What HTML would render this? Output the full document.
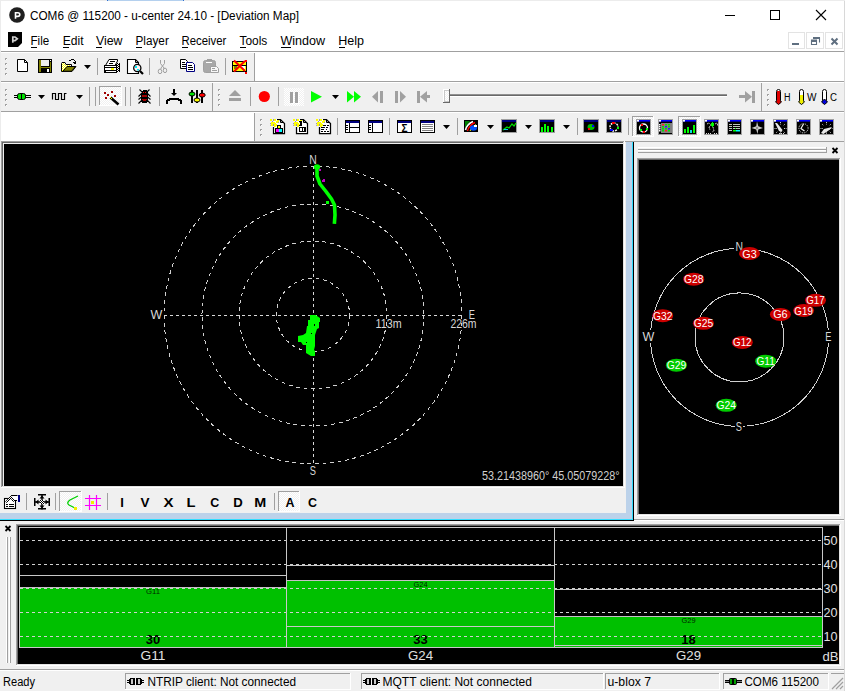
<!DOCTYPE html>
<html><head><meta charset="utf-8"><style>
html,body{margin:0;padding:0;background:#f0f0f0;overflow:hidden;width:845px;height:691px}
svg{position:absolute;left:0;top:0;display:block}
</style></head><body>
<svg width="845" height="691" viewBox="0 0 845 691">
<rect x="0" y="0" width="845" height="691" fill="#f0f0f0" />
<rect x="0" y="0" width="845" height="30" fill="#ffffff" />
<circle cx="17" cy="15" r="7.8" fill="#1f1f1f"/>
<path d="M15.5 18.8 V12.8 H17.8 Q19.8 12.8 19.8 14.6 Q19.8 16.4 17.8 16.4 H15.5" fill="none" stroke="#fff" stroke-width="1.6"/>
<text x="30" y="20" font-family='"Liberation Sans", sans-serif' font-size="12" font-weight="normal" fill="#000" text-anchor="start"  textLength="269" lengthAdjust="spacingAndGlyphs">COM6 @ 115200 - u-center 24.10 - [Deviation Map]</text>
<rect x="725" y="15" width="10" height="1" fill="#000" />
<rect x="770.5" y="10.5" width="9" height="9" fill="none" stroke="#000" stroke-width="1"/>
<path d="M816 10 L826 20 M826 10 L816 20" stroke="#000" stroke-width="1.1"/>
<rect x="0" y="30" width="845" height="21" fill="#ffffff" />
<path d="M8 32 H22 V43 L18 47 H8 Z" fill="#000"/>
<path d="M12.8 42.8 V37 H15 L17.3 38.8 L15 40.6 H12.8" fill="none" stroke="#d0d0d0" stroke-width="1.7"/>
<text x="30.5" y="45" font-family='"Liberation Sans", sans-serif' font-size="12" font-weight="normal" fill="#000" text-anchor="start"  textLength="18.7" lengthAdjust="spacingAndGlyphs">File</text>
<rect x="31" y="47" width="6" height="1" fill="#000" />
<text x="62.7" y="45" font-family='"Liberation Sans", sans-serif' font-size="12" font-weight="normal" fill="#000" text-anchor="start"  textLength="20.8" lengthAdjust="spacingAndGlyphs">Edit</text>
<rect x="63" y="47" width="6" height="1" fill="#000" />
<text x="95.9" y="45" font-family='"Liberation Sans", sans-serif' font-size="12" font-weight="normal" fill="#000" text-anchor="start"  textLength="26.6" lengthAdjust="spacingAndGlyphs">View</text>
<rect x="96" y="47" width="6" height="1" fill="#000" />
<text x="135.5" y="45" font-family='"Liberation Sans", sans-serif' font-size="12" font-weight="normal" fill="#000" text-anchor="start"  textLength="33.3" lengthAdjust="spacingAndGlyphs">Player</text>
<rect x="136" y="47" width="6" height="1" fill="#000" />
<text x="181.6" y="45" font-family='"Liberation Sans", sans-serif' font-size="12" font-weight="normal" fill="#000" text-anchor="start"  textLength="44.8" lengthAdjust="spacingAndGlyphs">Receiver</text>
<rect x="182" y="47" width="6" height="1" fill="#000" />
<text x="239.5" y="45" font-family='"Liberation Sans", sans-serif' font-size="12" font-weight="normal" fill="#000" text-anchor="start"  textLength="27.8" lengthAdjust="spacingAndGlyphs">Tools</text>
<rect x="240" y="47" width="6" height="1" fill="#000" />
<text x="280.5" y="45" font-family='"Liberation Sans", sans-serif' font-size="12" font-weight="normal" fill="#000" text-anchor="start"  textLength="44.6" lengthAdjust="spacingAndGlyphs">Window</text>
<rect x="281" y="47" width="10" height="1" fill="#000" />
<text x="338.3" y="45" font-family='"Liberation Sans", sans-serif' font-size="12" font-weight="normal" fill="#000" text-anchor="start"  textLength="25.8" lengthAdjust="spacingAndGlyphs">Help</text>
<rect x="339" y="47" width="6" height="1" fill="#000" />
<rect x="788.5" y="32.5" width="16" height="16" fill="#fff" stroke="#e3e3e3"/>
<rect x="806.5" y="32.5" width="17" height="16" fill="#fff" stroke="#e3e3e3"/>
<rect x="825.5" y="32.5" width="17" height="16" fill="#fff" stroke="#e3e3e3"/>
<rect x="792" y="43" width="7" height="2" fill="#5f6f80" />
<path d="M814 38 H819.5 V42.5 M811.5 44.5 V40 H816.5 V44.5 Z" fill="none" stroke="#5f6f80" stroke-width="1.1"/>
<rect x="811" y="40" width="6" height="2" fill="#5f6f80" />
<rect x="813" y="37" width="7" height="2" fill="#5f6f80" />
<path d="M831.5 38.5 L837.5 44.5 M837.5 38.5 L831.5 44.5" stroke="#5f6f80" stroke-width="2"/>
<rect x="0" y="51" width="844" height="1" fill="#a0a0a0" />
<rect x="0" y="52" width="845" height="89" fill="#ffffff" />
<rect x="0" y="53" width="254" height="28" fill="#f0f0f0" />
<rect x="254" y="53" width="1" height="29" fill="#a0a0a0" />
<rect x="0" y="81" width="845" height="1" fill="#a0a0a0" />
<rect x="0" y="83" width="845" height="28" fill="#f0f0f0" />
<rect x="0" y="111" width="845" height="1" fill="#a0a0a0" />
<rect x="212" y="83" width="1" height="29" fill="#a0a0a0" />
<rect x="761" y="83" width="1" height="29" fill="#a0a0a0" />
<rect x="255" y="113" width="589" height="28" fill="#f0f0f0" />
<rect x="254" y="113" width="1" height="29" fill="#a0a0a0" />
<rect x="254" y="141" width="590" height="1" fill="#a0a0a0" />
<defs><pattern id="dith" x="0" y="0" width="2" height="2" patternUnits="userSpaceOnUse"><rect width="2" height="2" fill="#f0f0f0"/><rect width="1" height="1" fill="#fff"/><rect x="1" y="1" width="1" height="1" fill="#fff"/></pattern><pattern id="chk" x="0" y="0" width="2" height="2" patternUnits="userSpaceOnUse"><rect width="2" height="2" fill="#fff"/><rect width="1" height="1" fill="#000"/><rect x="1" y="1" width="1" height="1" fill="#000"/></pattern></defs>
<rect x="5" y="58" width="2" height="2" fill="#a0a0a0" />
<rect x="6" y="59" width="1" height="1" fill="#ffffff" />
<rect x="5" y="63" width="2" height="2" fill="#a0a0a0" />
<rect x="6" y="64" width="1" height="1" fill="#ffffff" />
<rect x="5" y="68" width="2" height="2" fill="#a0a0a0" />
<rect x="6" y="69" width="1" height="1" fill="#ffffff" />
<rect x="5" y="73" width="2" height="2" fill="#a0a0a0" />
<rect x="6" y="74" width="1" height="1" fill="#ffffff" />
<path d="M17.5 59.5 H24.5 L27.5 62.5 V71.5 H17.5 Z" fill="#fff" stroke="#000" stroke-width="1"/>
<path d="M24.5 59.5 V62.5 H27.5" fill="none" stroke="#000"/>
<rect x="38" y="59" width="14" height="14" fill="#000" />
<rect x="39" y="60" width="2" height="12" fill="#808000" />
<rect x="50" y="62" width="1" height="10" fill="#808000" />
<rect x="39" y="67" width="12" height="1" fill="#808000" />
<rect x="41" y="60" width="8" height="6" fill="#ececec" />
<rect x="50" y="60" width="1" height="1" fill="#fff" />
<rect x="47" y="69" width="2" height="3" fill="#fff" />
<defs><pattern id="ychk" x="0" y="0" width="2" height="2" patternUnits="userSpaceOnUse"><rect width="2" height="2" fill="#ffffff"/><rect width="1" height="1" fill="#ffff00"/><rect x="1" y="1" width="1" height="1" fill="#ffff00"/></pattern></defs>
<path d="M61.5 63.5 V71.5 H72 L76 66.5 H71.5 V64.5 H66 L65 62.5 H62 Z" fill="url(#ychk)" stroke="#000"/>
<path d="M63 71.2 L67 66.5 H75.5 L71.5 71.2 Z" fill="#808000" stroke="#000" stroke-width="1"/>
<rect x="69" y="60" width="2" height="1" fill="#000" />
<rect x="71" y="59" width="3" height="1" fill="#000" />
<rect x="74" y="60" width="1" height="1" fill="#000" />
<rect x="75" y="61" width="1" height="2" fill="#000" />
<rect x="73" y="62" width="3" height="1" fill="#000" />
<rect x="74" y="63" width="2" height="1" fill="#000" />
<path d="M84 65 h7 l-3.5 4 z" fill="#000"/>
<rect x="97" y="58" width="1" height="17" fill="#a0a0a0" />
<rect x="116" y="63" width="4" height="9" fill="url(#chk)" />
<rect x="119" y="64" width="1" height="8" fill="#000" />
<path d="M109 59.5 H117.5 V61 L115 65.5 H105.5 Z" fill="#fff" stroke="#000"/>
<rect x="110" y="61" width="5" height="1" fill="#000" />
<rect x="109" y="63" width="4" height="1" fill="#000" />
<rect x="104" y="65" width="13" height="8" fill="#000" />
<rect x="105" y="66" width="11" height="1" fill="#fff" />
<rect x="105" y="68" width="11" height="2" fill="#fff" />
<rect x="111" y="68" width="3" height="2" fill="#ffff00" />
<rect x="106" y="71" width="10" height="1" fill="#fff" />
<path d="M127.5 59.5 H135.5 L138.5 62.5 V73.5 H127.5 Z" fill="#fff" stroke="#000" stroke-width="1.1"/>
<path d="M135.5 59.5 V62.5 H138.5" fill="none" stroke="#000"/>
<circle cx="137.3" cy="68" r="3.6" fill="#fff4f4" stroke="#000" stroke-width="1.3"/>
<rect x="135" y="66" width="2" height="2" fill="#00f0ff" />
<rect x="137" y="69" width="2" height="1.5" fill="#00f0ff" />
<path d="M140 71 L143 74" stroke="#000" stroke-width="2.2"/>
<rect x="149" y="58" width="1" height="17" fill="#a0a0a0" />
<path d="M160.5 60 V63.5 L164 68 V69 M164.5 60 V63.5 L161 68 V69" fill="none" stroke="#a0a0a0" stroke-width="1"/>
<ellipse cx="160" cy="71.4" rx="1.8" ry="2.3" fill="none" stroke="#a0a0a0"/><ellipse cx="165" cy="70.4" rx="1.7" ry="2.3" fill="none" stroke="#a0a0a0"/>
<path d="M180.5 59.5 H185.5 L187.5 61.5 V68.5 H180.5 Z" fill="#fff" stroke="#000"/>
<rect x="182" y="62" width="3" height="1" fill="#000" />
<rect x="182" y="64" width="4" height="1" fill="#000" />
<rect x="182" y="66" width="4" height="1" fill="#000" />
<path d="M186.5 62.5 H192.5 L194.5 64.5 V71.5 H186.5 Z" fill="#fff" stroke="#000080"/>
<rect x="188" y="65" width="4" height="1" fill="#000" />
<rect x="188" y="67" width="5" height="1" fill="#000" />
<rect x="188" y="69" width="5" height="1" fill="#000" />
<rect x="203.5" y="60.5" width="12" height="12" rx="2" fill="#a8a8a8" stroke="#a0a0a0"/>
<rect x="207" y="59" width="5" height="2" fill="#a0a0a0" />
<rect x="206" y="62" width="6" height="1" fill="#fff" />
<path d="M210.5 66.5 H216.5 L218.5 68.5 V72.5 H210.5 Z" fill="#f8f8f8" stroke="#a0a0a0"/>
<rect x="212" y="68" width="3" height="1" fill="#a0a0a0" />
<rect x="212" y="70" width="5" height="1" fill="#a0a0a0" />
<rect x="225" y="58" width="1" height="17" fill="#a0a0a0" />
<rect x="232" y="61" width="15" height="11" fill="#000" />
<rect x="233" y="62" width="13" height="3" fill="#ffff00" />
<rect x="233" y="66" width="13" height="5" fill="#ffff00" />
<rect x="241" y="66" width="4" height="3" fill="#fff" />
<rect x="234" y="66" width="3" height="3" fill="#808000" />
<path d="M234 60.5 L245 71 M234 71.5 L245 61" stroke="#ff0000" stroke-width="2"/>
<rect x="245" y="60" width="2" height="2" fill="#ff0000" />
<rect x="245" y="72" width="2" height="2" fill="#ff0000" />
<rect x="5" y="89" width="2" height="2" fill="#a0a0a0" />
<rect x="6" y="90" width="1" height="1" fill="#ffffff" />
<rect x="5" y="94" width="2" height="2" fill="#a0a0a0" />
<rect x="6" y="95" width="1" height="1" fill="#ffffff" />
<rect x="5" y="99" width="2" height="2" fill="#a0a0a0" />
<rect x="6" y="100" width="1" height="1" fill="#ffffff" />
<rect x="5" y="104" width="2" height="2" fill="#a0a0a0" />
<rect x="6" y="105" width="1" height="1" fill="#ffffff" />
<rect x="14" y="95" width="17" height="1" fill="#000" />
<rect x="14" y="97" width="17" height="1" fill="#000" />
<rect x="17.5" y="93.5" width="8" height="6" rx="2" fill="#00e000" stroke="#000"/>
<rect x="21" y="94" width="1" height="5" fill="#000" />
<path d="M38 95 h7 l-3.5 4 z" fill="#000"/>
<path d="M52.5 99.5 V93.5 H55.5 V99.5 H58.5 V93.5 H61.5 V99.5 H64.5 V93.5 H66.5" fill="none" stroke="#000" stroke-width="1.2"/>
<path d="M76 95 h7 l-3.5 4 z" fill="#000"/>
<rect x="89" y="87" width="1" height="19" fill="#a0a0a0" />
<rect x="95" y="87" width="1" height="19" fill="#a0a0a0" />
<rect x="99" y="86" width="23" height="20" fill="url(#dith)" />
<rect x="99" y="86" width="23" height="1" fill="#a0a0a0" />
<rect x="99" y="86" width="1" height="20" fill="#a0a0a0" />
<rect x="99" y="105" width="23" height="1" fill="#ffffff" />
<rect x="121" y="86" width="1" height="20" fill="#ffffff" />
<path d="M110.5 97.5 L118.5 104.5" stroke="#000" stroke-width="2.6"/>
<rect x="110" y="97" width="1" height="1" fill="#ffff00" />
<rect x="111" y="98" width="1" height="1" fill="#ffff00" />
<rect x="104" y="92" width="2" height="2" fill="#a00000" />
<rect x="111" y="91" width="2" height="2" fill="#a00000" />
<rect x="107" y="94" width="2" height="2" fill="#a00000" />
<rect x="114" y="95" width="2" height="2" fill="#a00000" />
<rect x="105" y="97" width="2" height="2" fill="#a00000" />
<rect x="125" y="87" width="1" height="19" fill="#a0a0a0" />
<rect x="130" y="87" width="1" height="19" fill="#a0a0a0" />
<path d="M139.5 89.5 L142.5 92.5 M149.5 89.5 L146.5 92.5 M138.5 96.5 L141.5 93.5 M150.5 96.5 L147.5 93.5 M138.5 99.5 L141.5 97 M150.5 99.5 L147.5 97 M138.5 103.5 L141.5 100.5 M150.5 103.5 L147.5 100.5" stroke="#000" stroke-width="1.1"/>
<rect x="143" y="90" width="4" height="4" fill="#000" />
<rect x="142" y="91" width="6" height="2" fill="#000" />
<rect x="143" y="92" width="1" height="1" fill="#ff0000" />
<rect x="145" y="92" width="1" height="1" fill="#ff0000" />
<rect x="141" y="93" width="7" height="9" fill="#000" />
<rect x="142" y="102" width="5" height="1" fill="#000" />
<rect x="142" y="95" width="5" height="2" fill="#a00000" />
<rect x="142" y="99" width="5" height="1" fill="#a00000" />
<rect x="143" y="100" width="3" height="1" fill="#a00000" />
<rect x="159" y="87" width="1" height="19" fill="#a0a0a0" />
<rect x="173" y="89" width="2" height="4" fill="#000" />
<path d="M171 93 H177 L174 96 Z" fill="#000"/>
<rect x="169" y="98" width="10" height="2" fill="#000" />
<rect x="167" y="99" width="3" height="2" fill="#000" />
<rect x="166" y="100" width="2" height="4" fill="#000" />
<rect x="178" y="99" width="3" height="2" fill="#000" />
<rect x="180" y="100" width="2" height="4" fill="#000" />
<rect x="191" y="90" width="2" height="13" fill="#000" />
<rect x="196" y="90" width="2" height="13" fill="#000" />
<rect x="201" y="90" width="2" height="13" fill="#000" />
<ellipse cx="192" cy="94" rx="3" ry="2" fill="#00e000" stroke="#000"/>
<ellipse cx="197" cy="100" rx="3" ry="2" fill="#ffff00" stroke="#000"/>
<ellipse cx="202.2" cy="95.1" rx="3" ry="2" fill="#ff0000" stroke="#000"/>
<rect x="218" y="89" width="2" height="2" fill="#a0a0a0" />
<rect x="219" y="90" width="1" height="1" fill="#ffffff" />
<rect x="218" y="94" width="2" height="2" fill="#a0a0a0" />
<rect x="219" y="95" width="1" height="1" fill="#ffffff" />
<rect x="218" y="99" width="2" height="2" fill="#a0a0a0" />
<rect x="219" y="100" width="1" height="1" fill="#ffffff" />
<rect x="218" y="104" width="2" height="2" fill="#a0a0a0" />
<rect x="219" y="105" width="1" height="1" fill="#ffffff" />
<path d="M229 96 L235 90 L241 96 Z" fill="#a0a0a0"/>
<rect x="229" y="98" width="12" height="3" fill="#a0a0a0" />
<rect x="250" y="87" width="1" height="19" fill="#a0a0a0" />
<circle cx="264.3" cy="96.5" r="5.6" fill="#ff0000"/>
<rect x="278" y="87" width="1" height="19" fill="#a0a0a0" />
<rect x="284" y="88" width="20" height="18" fill="url(#dith)" />
<rect x="290" y="92" width="3" height="11" fill="#a0a0a0" />
<rect x="295" y="92" width="3" height="11" fill="#a0a0a0" />
<rect x="293" y="93" width="1" height="11" fill="#fff" />
<rect x="298" y="93" width="1" height="11" fill="#fff" />
<rect x="291" y="103" width="3" height="1" fill="#fff" />
<rect x="296" y="103" width="3" height="1" fill="#fff" />
<path d="M311 91 L322 96.8 L311 102.5 Z" fill="#00ff00"/>
<path d="M332 95 h7 l-3.5 4 z" fill="#000"/>
<path d="M347 91 L354 96.8 L347 102.5 Z M354 91 L361 96.8 L354 102.5 Z" fill="#00ff00"/>
<path d="M378 91 L372 96.8 L378 102.5 Z" fill="#a0a0a0"/>
<rect x="380" y="91" width="3" height="12" fill="#a0a0a0" />
<rect x="395" y="91" width="3" height="12" fill="#a0a0a0" />
<path d="M400 91 L406 96.8 L400 102.5 Z" fill="#a0a0a0"/>
<rect x="417" y="91" width="3" height="12" fill="#a0a0a0" />
<path d="M427 91 L420 96.8 L427 102.5 Z" fill="#a0a0a0"/>
<rect x="423" y="95" width="7" height="3" fill="#a0a0a0" />
<rect x="449" y="94" width="278" height="1" fill="#909090" />
<rect x="449" y="95" width="278" height="1" fill="#696969" />
<rect x="449" y="96" width="278" height="1" fill="#ffffff" />
<rect x="443" y="89" width="7" height="14" fill="#ffffff" />
<rect x="444" y="90" width="5" height="12" fill="#c8c8c8" />
<rect x="445" y="91" width="4" height="10" fill="url(#dith)" />
<rect x="449" y="89" width="1" height="14" fill="#696969" />
<rect x="443" y="102" width="7" height="1" fill="#696969" />
<rect x="752" y="91" width="3" height="12" fill="#a0a0a0" />
<path d="M745 91 L752 96.8 L745 102.5 Z" fill="#a0a0a0"/>
<rect x="739" y="95" width="7" height="3" fill="#a0a0a0" />
<rect x="767" y="89" width="2" height="2" fill="#a0a0a0" />
<rect x="768" y="90" width="1" height="1" fill="#ffffff" />
<rect x="767" y="94" width="2" height="2" fill="#a0a0a0" />
<rect x="768" y="95" width="1" height="1" fill="#ffffff" />
<rect x="767" y="99" width="2" height="2" fill="#a0a0a0" />
<rect x="768" y="100" width="1" height="1" fill="#ffffff" />
<rect x="767" y="104" width="2" height="2" fill="#a0a0a0" />
<rect x="768" y="105" width="1" height="1" fill="#ffffff" />
<rect x="776.5" y="89.5" width="4" height="13" rx="2" fill="#fff" stroke="#000"/>
<path d="M778.5 99 L781.5 102 L778.5 104.5 L775.5 102 Z" fill="#e00000" stroke="#000"/>
<rect x="777" y="91" width="3" height="10" fill="#e00000" />
<text x="784" y="100.5" font-family='"Liberation Sans", sans-serif' font-size="10" font-weight="normal" fill="#000" text-anchor="start"  textLength="6.5" lengthAdjust="spacingAndGlyphs">H</text>
<rect x="799.5" y="89.5" width="4" height="13" rx="2" fill="#fff" stroke="#000"/>
<path d="M801.5 99 L804.5 102 L801.5 104.5 L798.5 102 Z" fill="#f0f000" stroke="#000"/>
<rect x="800" y="95" width="3" height="6" fill="#f0f000" />
<text x="807" y="100.5" font-family='"Liberation Sans", sans-serif' font-size="10" font-weight="normal" fill="#000" text-anchor="start"  textLength="9.5" lengthAdjust="spacingAndGlyphs">W</text>
<rect x="822.5" y="89.5" width="4" height="13" rx="2" fill="#fff" stroke="#000"/>
<path d="M824.5 99 L827.5 102 L824.5 104.5 L821.5 102 Z" fill="#0000e0" stroke="#000"/>
<rect x="823" y="101" width="3" height="0" fill="#0000e0" />
<text x="830" y="100.5" font-family='"Liberation Sans", sans-serif' font-size="10" font-weight="normal" fill="#000" text-anchor="start"  textLength="7" lengthAdjust="spacingAndGlyphs">C</text>
<rect x="260" y="119" width="2" height="2" fill="#a0a0a0" />
<rect x="261" y="120" width="1" height="1" fill="#ffffff" />
<rect x="260" y="124" width="2" height="2" fill="#a0a0a0" />
<rect x="261" y="125" width="1" height="1" fill="#ffffff" />
<rect x="260" y="129" width="2" height="2" fill="#a0a0a0" />
<rect x="261" y="130" width="1" height="1" fill="#ffffff" />
<rect x="260" y="134" width="2" height="2" fill="#a0a0a0" />
<rect x="261" y="135" width="1" height="1" fill="#ffffff" />
<path d="M273 134 V119 H281 L285 123 V134 Z" fill="#fff"/>
<path d="M273.5 127 V133.5 H284.5 V123.5 L280.5 119.5 H277" fill="none" stroke="#000" stroke-width="1.25"/>
<path d="M280.5 120 V122.5 H284" fill="none" stroke="#000" stroke-width="1"/>
<path d="M270 119 L273 122 M276 122.5 H279 M270 123.5 H272 M273.5 119 V121 M273.5 124 V126 M270 125.5 L271 125" stroke="#9898a8" stroke-width="1"/>
<rect x="270" y="119" width="2" height="2" fill="#ffff00" />
<rect x="274" y="119" width="2" height="2" fill="#ffff00" />
<rect x="277" y="120" width="2" height="2" fill="#ffff00" />
<rect x="276" y="121" width="2" height="2" fill="#ffff00" />
<rect x="271" y="122" width="2" height="2" fill="#ffff00" />
<rect x="273" y="122" width="2" height="2" fill="#ffff00" />
<rect x="274" y="123" width="2" height="2" fill="#ffff00" />
<rect x="275" y="124" width="2" height="2" fill="#ffff00" />
<rect x="271" y="124" width="2" height="2" fill="#ffff00" />
<rect x="274" y="125" width="2" height="2" fill="#ffff00" />
<rect x="275" y="128" width="8" height="5" fill="#000" />
<rect x="276" y="129" width="3" height="3" fill="#ff00ff" />
<rect x="279" y="129" width="3" height="3" fill="#00ffff" />
<rect x="277" y="125" width="4" height="4" fill="#000" />
<rect x="278" y="126" width="2" height="2" fill="#ffff00" />
<path d="M296 134 V119 H304 L308 123 V134 Z" fill="#fff"/>
<path d="M296.5 127 V133.5 H307.5 V123.5 L303.5 119.5 H300" fill="none" stroke="#000" stroke-width="1.25"/>
<path d="M303.5 120 V122.5 H307" fill="none" stroke="#000" stroke-width="1"/>
<path d="M293 119 L296 122 M299 122.5 H302 M293 123.5 H295 M296.5 119 V121 M296.5 124 V126 M293 125.5 L294 125" stroke="#9898a8" stroke-width="1"/>
<rect x="293" y="119" width="2" height="2" fill="#ffff00" />
<rect x="297" y="119" width="2" height="2" fill="#ffff00" />
<rect x="300" y="120" width="2" height="2" fill="#ffff00" />
<rect x="299" y="121" width="2" height="2" fill="#ffff00" />
<rect x="294" y="122" width="2" height="2" fill="#ffff00" />
<rect x="296" y="122" width="2" height="2" fill="#ffff00" />
<rect x="297" y="123" width="2" height="2" fill="#ffff00" />
<rect x="298" y="124" width="2" height="2" fill="#ffff00" />
<rect x="294" y="124" width="2" height="2" fill="#ffff00" />
<rect x="297" y="125" width="2" height="2" fill="#ffff00" />
<rect x="300" y="121" width="2" height="5" fill="#000" />
<rect x="299" y="121" width="1" height="1" fill="#000" />
<rect x="299" y="125" width="3" height="1" fill="#000" />
<rect x="299" y="127" width="4" height="5" fill="#000" />
<rect x="300" y="128" width="2" height="3" fill="#fff" />
<rect x="304" y="127" width="2" height="5" fill="#000" />
<rect x="303" y="127" width="1" height="1" fill="#000" />
<rect x="303" y="131" width="3" height="1" fill="#000" />
<path d="M319 134 V119 H327 L331 123 V134 Z" fill="#fff"/>
<path d="M319.5 127 V133.5 H330.5 V123.5 L326.5 119.5 H323" fill="none" stroke="#000" stroke-width="1.25"/>
<path d="M326.5 120 V122.5 H330" fill="none" stroke="#000" stroke-width="1"/>
<path d="M316 119 L319 122 M322 122.5 H325 M316 123.5 H318 M319.5 119 V121 M319.5 124 V126 M316 125.5 L317 125" stroke="#9898a8" stroke-width="1"/>
<rect x="316" y="119" width="2" height="2" fill="#ffff00" />
<rect x="320" y="119" width="2" height="2" fill="#ffff00" />
<rect x="323" y="120" width="2" height="2" fill="#ffff00" />
<rect x="322" y="121" width="2" height="2" fill="#ffff00" />
<rect x="317" y="122" width="2" height="2" fill="#ffff00" />
<rect x="319" y="122" width="2" height="2" fill="#ffff00" />
<rect x="320" y="123" width="2" height="2" fill="#ffff00" />
<rect x="321" y="124" width="2" height="2" fill="#ffff00" />
<rect x="317" y="124" width="2" height="2" fill="#ffff00" />
<rect x="320" y="125" width="2" height="2" fill="#ffff00" />
<rect x="323" y="125" width="3" height="1" fill="#000" />
<rect x="327" y="125" width="2" height="1" fill="#000" />
<rect x="321" y="127" width="4" height="1" fill="#000" />
<rect x="326" y="127" width="2" height="1" fill="#000" />
<rect x="321" y="129" width="3" height="1" fill="#000" />
<rect x="326" y="129" width="1" height="1" fill="#000" />
<rect x="321" y="131" width="2" height="1" fill="#000" />
<rect x="324" y="131" width="2" height="1" fill="#000" />
<rect x="327" y="131" width="2" height="1" fill="#000" />
<rect x="337" y="118" width="1" height="17" fill="#a0a0a0" />
<rect x="345" y="120" width="15" height="13" fill="#000" />
<rect x="346" y="121" width="13" height="2" fill="#000080" />
<rect x="346" y="123" width="13" height="9" fill="#fff" />
<rect x="349" y="123" width="1" height="9" fill="#000" />
<rect x="349" y="127" width="10" height="1" fill="#000" />
<rect x="346" y="125" width="2" height="1" fill="#000" />
<rect x="346" y="127" width="2" height="1" fill="#000" />
<rect x="346" y="129" width="2" height="1" fill="#000" />
<rect x="368" y="120" width="15" height="13" fill="#000" />
<rect x="369" y="121" width="13" height="2" fill="#000080" />
<rect x="369" y="123" width="13" height="9" fill="#fff" />
<rect x="372" y="123" width="1" height="9" fill="#000" />
<rect x="369" y="125" width="2" height="1" fill="#000" />
<rect x="369" y="127" width="2" height="1" fill="#000" />
<rect x="369" y="129" width="2" height="1" fill="#000" />
<rect x="389" y="118" width="1" height="17" fill="#a0a0a0" />
<rect x="397" y="120" width="15" height="13" fill="#000" />
<rect x="398" y="121" width="13" height="2" fill="#000080" />
<rect x="398" y="123" width="13" height="9" fill="#fff" />
<text x="404.5" y="131.5" font-family='"Liberation Sans", sans-serif' font-size="10" font-weight="bold" fill="#000" text-anchor="middle" >&#931;</text>
<rect x="420" y="120" width="15" height="13" fill="#000" />
<rect x="421" y="121" width="13" height="2" fill="#000080" />
<rect x="421" y="123" width="13" height="9" fill="#fff" />
<rect x="422" y="124" width="11" height="1" fill="#808080" />
<rect x="422" y="126" width="11" height="1" fill="#808080" />
<rect x="422" y="128" width="11" height="1" fill="#808080" />
<rect x="422" y="130" width="11" height="1" fill="#808080" />
<path d="M443 125 h7 l-3.5 4 z" fill="#000"/>
<rect x="457" y="118" width="1" height="17" fill="#a0a0a0" />
<rect x="464" y="120" width="14" height="12" fill="#000" />
<rect x="465" y="121" width="12" height="10" fill="#000" />
<path d="M465 121 H470 L465 128 Z" fill="#008000"/>
<path d="M465.5 130 Q467 124 473 121.5" stroke="#ffffff" stroke-width="1.6" fill="none"/>
<path d="M467.5 131 Q469 125 475 122.5" stroke="#ff0000" stroke-width="1.4" fill="none"/>
<path d="M470 131 Q471 127 476 124.5" stroke="#ffff00" stroke-width="1" fill="none"/>
<ellipse cx="473.5" cy="128" rx="3.5" ry="2.8" fill="#0050ff"/>
<rect x="474" y="125" width="3" height="2" fill="#fff" />
<path d="M487 125 h7 l-3.5 4 z" fill="#000"/>
<rect x="501" y="119" width="16" height="14" fill="#a0a0a0" />
<rect x="502" y="120" width="14" height="12" fill="#000" />
<rect x="502" y="120" width="14" height="2" fill="#000080" />
<path d="M503 130 L507 127 L509 128 L512 124 L514 126 L516 123" stroke="#00e000" stroke-width="1.2" fill="none"/>
<rect x="504" y="129" width="4" height="1" fill="#00c8ff" />
<path d="M525 125 h7 l-3.5 4 z" fill="#000"/>
<rect x="539" y="119" width="16" height="14" fill="#a0a0a0" />
<rect x="540" y="120" width="14" height="12" fill="#000" />
<rect x="540" y="120" width="14" height="2" fill="#000080" />
<rect x="541" y="127" width="2" height="5" fill="#00ff00" />
<rect x="544" y="124" width="2" height="8" fill="#00ff00" />
<rect x="547" y="126" width="2" height="6" fill="#00ff00" />
<rect x="551" y="127" width="2" height="5" fill="#00ff00" />
<path d="M563 125 h7 l-3.5 4 z" fill="#000"/>
<rect x="577" y="118" width="1" height="17" fill="#a0a0a0" />
<rect x="583" y="119" width="16" height="14" fill="#a0a0a0" />
<rect x="584" y="120" width="14" height="12" fill="#000" />
<rect x="584" y="120" width="14" height="2" fill="#000080" />
<ellipse cx="591" cy="127" rx="3.5" ry="3" fill="#00c000"/>
<rect x="588" y="128" width="2" height="2" fill="#ff0000" />
<rect x="592" y="125" width="2" height="2" fill="#0000ff" />
<rect x="606" y="119" width="16" height="14" fill="#a0a0a0" />
<rect x="607" y="120" width="14" height="12" fill="#000" />
<rect x="607" y="120" width="14" height="2" fill="#000080" />
<circle cx="614" cy="127" r="4" fill="none" stroke="#fff" stroke-width="1.5" stroke-dasharray="2 1"/>
<rect x="612" y="122" width="3" height="2" fill="#ff0000" />
<rect x="610" y="129" width="3" height="2" fill="#0000ff" />
<rect x="617" y="127" width="2" height="2" fill="#00ff00" />
<rect x="628" y="118" width="1" height="17" fill="#a0a0a0" />
<rect x="632" y="116" width="22" height="21" fill="url(#dith)" />
<rect x="632" y="116" width="22" height="1" fill="#a0a0a0" />
<rect x="632" y="116" width="1" height="21" fill="#a0a0a0" />
<rect x="632" y="136" width="22" height="1" fill="#ffffff" />
<rect x="653" y="116" width="1" height="21" fill="#ffffff" />
<rect x="636" y="119" width="15" height="16" fill="#a0a0a0" />
<rect x="637" y="120" width="13" height="14" fill="#000" />
<rect x="637" y="120" width="13" height="1.6" fill="#0000ff" />
<rect x="637" y="120" width="2" height="1.6" fill="#fff" />
<circle cx="643.5" cy="128" r="4" fill="none" stroke="#fff" stroke-width="1.3"/>
<rect x="641" y="124" width="2" height="2" fill="#ff0000" />
<rect x="646" y="128" width="2" height="2" fill="#00ff00" />
<rect x="640" y="129" width="2" height="2" fill="#00ff00" />
<rect x="643" y="131" width="2" height="2" fill="#ff0000" />
<rect x="658" y="119" width="15" height="16" fill="#a0a0a0" />
<rect x="659" y="120" width="13" height="14" fill="#000" />
<rect x="659" y="120" width="13" height="1.6" fill="#0000ff" />
<rect x="659" y="120" width="2" height="1.6" fill="#fff" />
<rect x="661" y="123" width="11" height="10" fill="#808080" />
<rect x="662" y="124" width="2" height="1.5" fill="#ff2020" />
<rect x="665" y="124" width="2" height="1.5" fill="#00e000" />
<rect x="668" y="124" width="2" height="1.5" fill="#00e000" />
<rect x="662" y="126" width="2" height="1.5" fill="#00e000" />
<rect x="665" y="126" width="2" height="1.5" fill="#2020ff" />
<rect x="668" y="126" width="2" height="1.5" fill="#00e000" />
<rect x="662" y="128" width="2" height="1.5" fill="#00e000" />
<rect x="665" y="128" width="2" height="1.5" fill="#00e000" />
<rect x="668" y="128" width="2" height="1.5" fill="#2020ff" />
<rect x="662" y="130" width="2" height="1.5" fill="#00e000" />
<rect x="665" y="130" width="2" height="1.5" fill="#ff2020" />
<rect x="668" y="130" width="2" height="1.5" fill="#00e000" />
<rect x="659" y="124" width="1.5" height="1.5" fill="#ffffff" />
<rect x="659" y="126" width="1.5" height="1.5" fill="#ffffff" />
<rect x="659" y="128" width="1.5" height="1.5" fill="#ffffff" />
<rect x="659" y="130" width="1.5" height="1.5" fill="#ffffff" />
<rect x="678" y="116" width="23" height="21" fill="url(#dith)" />
<rect x="678" y="116" width="23" height="1" fill="#a0a0a0" />
<rect x="678" y="116" width="1" height="21" fill="#a0a0a0" />
<rect x="678" y="136" width="23" height="1" fill="#ffffff" />
<rect x="700" y="116" width="1" height="21" fill="#ffffff" />
<rect x="682" y="119" width="15" height="16" fill="#a0a0a0" />
<rect x="683" y="120" width="13" height="14" fill="#000" />
<rect x="683" y="120" width="13" height="1.6" fill="#0000ff" />
<rect x="683" y="120" width="2" height="1.6" fill="#fff" />
<rect x="684" y="129" width="2" height="4" fill="#00ff00" />
<rect x="687" y="127" width="2" height="6" fill="#00ff00" />
<rect x="690" y="130" width="2" height="3" fill="#00e0e0" />
<rect x="693" y="125" width="2" height="8" fill="#00ff00" />
<rect x="704" y="119" width="15" height="16" fill="#a0a0a0" />
<rect x="705" y="120" width="13" height="14" fill="#000" />
<rect x="705" y="120" width="13" height="1.6" fill="#0000ff" />
<rect x="705" y="120" width="2" height="1.6" fill="#fff" />
<path d="M707 124 L709 123 L711 125 L709 127 L710 130 M713 127 L714 131 L712 132 M715 124 L717 123 L718 126" fill="none" stroke="#e0e0e0" stroke-width="1" stroke-dasharray="1 0.6"/>
<rect x="711" y="123" width="3" height="3" fill="#00ff00" />
<rect x="712" y="122" width="1" height="5" fill="#00ff00" />
<rect x="706" y="133" width="1" height="1" fill="#ddd" />
<rect x="708" y="133" width="1" height="1" fill="#ddd" />
<rect x="710" y="133" width="1" height="1" fill="#ddd" />
<rect x="714" y="133" width="1" height="1" fill="#ddd" />
<rect x="716" y="133" width="1" height="1" fill="#ddd" />
<rect x="727" y="119" width="15" height="16" fill="#a0a0a0" />
<rect x="728" y="120" width="13" height="14" fill="#000" />
<rect x="728" y="120" width="13" height="1.6" fill="#0000ff" />
<rect x="728" y="120" width="2" height="1.6" fill="#fff" />
<rect x="729" y="124" width="3" height="1" fill="#c0c0c0" />
<rect x="733" y="124" width="7" height="1" fill="#c0c0c0" />
<rect x="729" y="126" width="3" height="1" fill="#c0c0c0" />
<rect x="733" y="126" width="7" height="1" fill="#c0c0c0" />
<rect x="729" y="128" width="3" height="1" fill="#c0c0c0" />
<rect x="733" y="128" width="7" height="1" fill="#c0c0c0" />
<rect x="729" y="130" width="3" height="1" fill="#c0c0c0" />
<rect x="733" y="130" width="7" height="1" fill="#c0c0c0" />
<rect x="733" y="130" width="3" height="1.5" fill="#00ff00" />
<rect x="736" y="130" width="4" height="1.5" fill="#00ffff" />
<rect x="735" y="128" width="1" height="1" fill="#00ff00" />
<rect x="750" y="119" width="15" height="16" fill="#a0a0a0" />
<rect x="751" y="120" width="13" height="14" fill="#000" />
<rect x="751" y="120" width="13" height="1.6" fill="#0000ff" />
<rect x="751" y="120" width="2" height="1.6" fill="#fff" />
<path d="M757 121.5 L758.3 126.3 L763 128 L758.3 129.5 L757.5 134 L756.2 129.5 L751.5 128 L756.2 126.3 Z" fill="#c8c8c8"/>
<rect x="756" y="127" width="2" height="2" fill="#909090" />
<rect x="773" y="119" width="15" height="16" fill="#a0a0a0" />
<rect x="774" y="120" width="13" height="14" fill="#000" />
<rect x="774" y="120" width="13" height="1.6" fill="#0000ff" />
<rect x="774" y="120" width="2" height="1.6" fill="#fff" />
<path d="M780.5 122 V124.5 M780.5 131.5 V134 M774.5 128.5 H777 M784 128.5 H786.5 M776 124 L777.5 125.5 M785 124 L783.5 125.5 M776 133 L777.5 131.5 M785 133 L783.5 131.5" stroke="#d0d0d0" stroke-width="1" stroke-dasharray="1 0.8"/>
<path d="M775 123 L777 123 L782.5 130 L781.5 132 L779 131 Z" fill="#e8e8e8"/>
<rect x="779" y="133" width="1" height="1" fill="#ddd" />
<rect x="781" y="133" width="1" height="1" fill="#ddd" />
<rect x="783" y="133" width="1" height="1" fill="#ddd" />
<rect x="796" y="119" width="15" height="16" fill="#a0a0a0" />
<rect x="797" y="120" width="13" height="14" fill="#000" />
<rect x="797" y="120" width="13" height="1.6" fill="#0000ff" />
<rect x="797" y="120" width="2" height="1.6" fill="#fff" />
<circle cx="803.5" cy="128.3" r="4.6" fill="none" stroke="#e0e0e0" stroke-width="1" stroke-dasharray="1 0.9"/>
<path d="M803.5 124 L801 128.5 L804.5 131" fill="none" stroke="#f0f0f0" stroke-width="1.2"/>
<rect x="819" y="119" width="15" height="16" fill="#a0a0a0" />
<rect x="820" y="120" width="13" height="14" fill="#000" />
<rect x="820" y="120" width="13" height="1.6" fill="#0000ff" />
<rect x="820" y="120" width="2" height="1.6" fill="#fff" />
<path d="M826.5 122 V124.5 M826.5 131.5 V134 M820.5 128.5 H823 M830 128.5 H832.5 M822 124 L823.5 125.5 M831 124 L829.5 125.5 M822 133 L823.5 131.5 M831 133 L829.5 131.5" stroke="#d0d0d0" stroke-width="1" stroke-dasharray="1 0.8"/>
<path d="M821 133 L824 129 L832 127 L830 129.5 L823.5 134 Z" fill="#e8e8e8"/>
<rect x="0" y="142" width="634" height="379" fill="#f0f0f0" />
<rect x="1" y="141" width="624" height="1" fill="#a0a0a0" />
<rect x="1" y="141" width="1" height="347" fill="#a0a0a0" />
<rect x="2" y="142" width="622" height="1" fill="#696969" />
<rect x="2" y="142" width="1" height="345" fill="#696969" />
<rect x="2" y="486" width="622" height="1" fill="#e3e3e3" />
<rect x="623" y="142" width="1" height="345" fill="#e3e3e3" />
<rect x="1" y="487" width="624" height="1" fill="#ffffff" />
<rect x="624" y="141" width="1" height="347" fill="#ffffff" />
<rect x="4" y="144" width="619" height="342" fill="#000" />
<rect x="626" y="142" width="7" height="377" fill="#bcd2ea" />
<rect x="0" y="513" width="633" height="6" fill="#bcd2ea" />
<rect x="632" y="142" width="1" height="378" fill="#33ddff" />
<rect x="0" y="519" width="633" height="1" fill="#33ddff" />
<rect x="633" y="142" width="1" height="379" fill="#000000" />
<rect x="0" y="520" width="634" height="1" fill="#000000" />
<rect x="634" y="142" width="211" height="378" fill="#f0f0f0" />
<rect x="637" y="158" width="204" height="1" fill="#a0a0a0" />
<rect x="637" y="158" width="1" height="358" fill="#a0a0a0" />
<rect x="638" y="159" width="202" height="1" fill="#696969" />
<rect x="638" y="159" width="1" height="356" fill="#696969" />
<rect x="638" y="514" width="202" height="1" fill="#e3e3e3" />
<rect x="839" y="159" width="1" height="356" fill="#e3e3e3" />
<rect x="637" y="515" width="204" height="1" fill="#ffffff" />
<rect x="840" y="158" width="1" height="358" fill="#ffffff" />
<rect x="639" y="160" width="200" height="354" fill="#000" />
<rect x="0" y="521" width="845" height="148" fill="#f0f0f0" />
<rect x="16" y="524" width="825" height="1" fill="#a0a0a0" />
<rect x="16" y="524" width="1" height="142" fill="#a0a0a0" />
<rect x="17" y="525" width="823" height="1" fill="#696969" />
<rect x="17" y="525" width="1" height="140" fill="#696969" />
<rect x="17" y="664" width="823" height="1" fill="#e3e3e3" />
<rect x="839" y="525" width="1" height="140" fill="#e3e3e3" />
<rect x="16" y="665" width="825" height="1" fill="#ffffff" />
<rect x="840" y="524" width="1" height="142" fill="#ffffff" />
<rect x="18" y="526" width="821" height="138" fill="#000" />
<circle cx="313" cy="315" r="36.6" fill="none" stroke="#d0d0d0" stroke-width="1" stroke-dasharray="3.8 3.8" shape-rendering="crispEdges"/>
<circle cx="313" cy="315" r="73.9" fill="none" stroke="#d0d0d0" stroke-width="1" stroke-dasharray="3.8 3.8" shape-rendering="crispEdges"/>
<circle cx="313" cy="315" r="111.0" fill="none" stroke="#d0d0d0" stroke-width="1" stroke-dasharray="3.8 3.8" shape-rendering="crispEdges"/>
<circle cx="313" cy="315" r="148.9" fill="none" stroke="#d0d0d0" stroke-width="1" stroke-dasharray="3.8 3.8" shape-rendering="crispEdges"/>
<path d="M313.5 166 V465 M164 315.5 H463" stroke="#d8d8d8" stroke-width="1" stroke-dasharray="3 3"/>
<text x="309.2" y="163.5" font-family='"Liberation Sans", sans-serif' font-size="12" font-weight="normal" fill="#d8d8d8" text-anchor="start"  textLength="7.5" lengthAdjust="spacingAndGlyphs">N</text>
<text x="309.7" y="475" font-family='"Liberation Sans", sans-serif' font-size="12" font-weight="normal" fill="#d8d8d8" text-anchor="start"  textLength="6.2" lengthAdjust="spacingAndGlyphs">S</text>
<text x="150.6" y="319" font-family='"Liberation Sans", sans-serif' font-size="12" font-weight="normal" fill="#d8d8d8" text-anchor="start"  textLength="11.8" lengthAdjust="spacingAndGlyphs">W</text>
<text x="468.7" y="319" font-family='"Liberation Sans", sans-serif' font-size="12" font-weight="normal" fill="#d8d8d8" text-anchor="start"  textLength="6.2" lengthAdjust="spacingAndGlyphs">E</text>
<text x="375.6" y="328" font-family='"Liberation Sans", sans-serif' font-size="12" font-weight="normal" fill="#d8d8d8" text-anchor="start"  textLength="26" lengthAdjust="spacingAndGlyphs">113m</text>
<text x="450.4" y="328" font-family='"Liberation Sans", sans-serif' font-size="12" font-weight="normal" fill="#d8d8d8" text-anchor="start"  textLength="26.2" lengthAdjust="spacingAndGlyphs">226m</text>
<text x="482" y="480" font-family='"Liberation Sans", sans-serif' font-size="12" font-weight="normal" fill="#d0d0d0" text-anchor="start"  textLength="137.5" lengthAdjust="spacingAndGlyphs">53.21438960&#176; 45.05079228&#176;</text>
<path d="M317 167 L317 176 L320 184 L326 191.5 L331.5 199 L334.5 205 L335 215 L334.5 222" fill="none" stroke="#00ff00" stroke-width="3.6" stroke-linejoin="round" stroke-linecap="square"/>
<ellipse cx="317" cy="167" rx="3.2" ry="2.8" fill="#00ff00"/>
<rect x="319" y="169" width="2" height="2" fill="#c000c0" />
<rect x="322" y="180" width="3" height="2" fill="#c000c0" />
<rect x="323" y="179" width="2" height="3" fill="#c000c0" />
<rect x="326" y="201" width="3" height="3" fill="#00ff00" />
<path d="M310 315 H316 L317 316 L320 318 V322 L319 322 V328 L317 329 L316 332 L315 335 V346 L314 350 L315 351 V356 H311 L306 353 V345 H303 L301 342 H298 V336 L303 335 L306 333 L307 326 H308 V320 H310 Z" fill="#00ff00"/>
<rect x="314" y="324" width="1" height="2" fill="#000" />
<rect x="311" y="333" width="1" height="1" fill="#000" />
<rect x="306" y="342" width="1" height="1" fill="#000" />
<rect x="4.5" y="498.5" width="11" height="10" fill="#fff" stroke="#000" stroke-width="1.1"/>
<rect x="12" y="496" width="6" height="4" fill="#fff" />
<path d="M11 495.5 H17.5 M12 500.5 H17" stroke="#000" stroke-width="1"/>
<path d="M5 502 L11 495 L15 501 L13 502 L11 499 L7 503 Z" fill="url(#chk)"/>
<rect x="18" y="495" width="2" height="7" fill="#000080" />
<rect x="6" y="504" width="2" height="1" fill="#000" />
<rect x="9" y="504" width="5" height="1" fill="#000" />
<rect x="6" y="506" width="2" height="1" fill="#000" />
<rect x="9" y="506" width="5" height="1" fill="#000" />
<rect x="26" y="493" width="1" height="17" fill="#a0a0a0" />
<rect x="38" y="494" width="8" height="1.5" fill="#000" />
<rect x="38" y="508" width="8" height="1.5" fill="#000" />
<rect x="34" y="498" width="1.5" height="8" fill="#000" />
<rect x="48.5" y="498" width="1.5" height="8" fill="#000" />
<path d="M42 494.5 V509.5 M34.5 502 H49.5" stroke="#000" stroke-width="1.4"/>
<path d="M42 495.5 l-2.5 3 h5z M42 508.5 l-2.5 -3 h5z M35.5 502 l3 -2.5 v5z M48.5 502 l-3 -2.5 v5z" fill="#000"/>
<rect x="40" y="500" width="4" height="4" fill="url(#chk)" />
<rect x="55" y="493" width="1" height="17" fill="#a0a0a0" />
<rect x="59" y="491" width="23" height="21" fill="url(#dith)" />
<rect x="59" y="491" width="23" height="1" fill="#a0a0a0" />
<rect x="59" y="491" width="1" height="21" fill="#a0a0a0" />
<rect x="59" y="511" width="23" height="1" fill="#ffffff" />
<rect x="81" y="491" width="1" height="21" fill="#ffffff" />
<path d="M78 496 L70 500 Q66 503 69 505 L75 508" fill="none" stroke="#00d000" stroke-width="1.3"/>
<rect x="74" y="507" width="3" height="3" fill="#f0f000" />
<path d="M89.5 495 V510 M96.5 495 V510 M85 498.5 H101 M85 505.5 H101" stroke="#ff00ff" stroke-width="1.2"/>
<rect x="91" y="501" width="3" height="3" fill="#f0f000" />
<rect x="107" y="493" width="1" height="17" fill="#a0a0a0" />
<text x="122" y="507" font-family='"Liberation Sans", sans-serif' font-size="13" font-weight="bold" fill="#000" text-anchor="middle" >I</text>
<text x="145" y="507" font-family='"Liberation Sans", sans-serif' font-size="13" font-weight="bold" fill="#000" text-anchor="middle"  textLength="9" lengthAdjust="spacingAndGlyphs">V</text>
<text x="168.5" y="507" font-family='"Liberation Sans", sans-serif' font-size="13" font-weight="bold" fill="#000" text-anchor="middle"  textLength="10" lengthAdjust="spacingAndGlyphs">X</text>
<text x="191" y="507" font-family='"Liberation Sans", sans-serif' font-size="13" font-weight="bold" fill="#000" text-anchor="middle"  textLength="9" lengthAdjust="spacingAndGlyphs">L</text>
<text x="214.7" y="507" font-family='"Liberation Sans", sans-serif' font-size="13" font-weight="bold" fill="#000" text-anchor="middle"  textLength="9" lengthAdjust="spacingAndGlyphs">C</text>
<text x="238" y="507" font-family='"Liberation Sans", sans-serif' font-size="13" font-weight="bold" fill="#000" text-anchor="middle"  textLength="9.5" lengthAdjust="spacingAndGlyphs">D</text>
<text x="260.2" y="507" font-family='"Liberation Sans", sans-serif' font-size="13" font-weight="bold" fill="#000" text-anchor="middle"  textLength="12" lengthAdjust="spacingAndGlyphs">M</text>
<rect x="274" y="493" width="1" height="17" fill="#a0a0a0" />
<rect x="278" y="491" width="22" height="21" fill="url(#dith)" />
<rect x="278" y="491" width="22" height="1" fill="#a0a0a0" />
<rect x="278" y="491" width="1" height="21" fill="#a0a0a0" />
<rect x="278" y="511" width="22" height="1" fill="#ffffff" />
<rect x="299" y="491" width="1" height="21" fill="#ffffff" />
<text x="290" y="507" font-family='"Liberation Sans", sans-serif' font-size="13" font-weight="bold" fill="#000" text-anchor="middle"  textLength="9" lengthAdjust="spacingAndGlyphs">A</text>
<text x="312.5" y="507" font-family='"Liberation Sans", sans-serif' font-size="13" font-weight="bold" fill="#000" text-anchor="middle"  textLength="9" lengthAdjust="spacingAndGlyphs">C</text>
<rect x="638" y="147" width="189" height="1" fill="#ffffff" />
<rect x="638" y="149" width="189" height="1" fill="#a0a0a0" />
<rect x="638" y="150" width="189" height="1" fill="#ffffff" />
<rect x="638" y="152" width="189" height="1" fill="#a0a0a0" />
<rect x="826" y="147" width="1" height="6" fill="#a0a0a0" />
<path d="M832.5 148 L837.5 153 M837.5 148 L832.5 153" stroke="#000" stroke-width="1.8"/>
<circle cx="739.5" cy="337.4" r="89" fill="none" stroke="#d0d0d0" stroke-width="1" shape-rendering="crispEdges"/>
<circle cx="739.5" cy="337.4" r="44.5" fill="none" stroke="#d0d0d0" stroke-width="1" shape-rendering="crispEdges"/>
<rect x="734" y="240" width="10" height="13" fill="#000" />
<rect x="735" y="421" width="8" height="12" fill="#000" />
<rect x="641" y="330" width="15" height="13" fill="#000" />
<rect x="824" y="330" width="9" height="13" fill="#000" />
<text x="735.5" y="251" font-family='"Liberation Sans", sans-serif' font-size="12" font-weight="normal" fill="#d8d8d8" text-anchor="start"  textLength="7.5" lengthAdjust="spacingAndGlyphs">N</text>
<text x="735.8" y="430.8" font-family='"Liberation Sans", sans-serif' font-size="12" font-weight="normal" fill="#d8d8d8" text-anchor="start"  textLength="6.2" lengthAdjust="spacingAndGlyphs">S</text>
<text x="642.5" y="341" font-family='"Liberation Sans", sans-serif' font-size="12" font-weight="normal" fill="#d8d8d8" text-anchor="start"  textLength="11.8" lengthAdjust="spacingAndGlyphs">W</text>
<text x="825.2" y="341" font-family='"Liberation Sans", sans-serif' font-size="12" font-weight="normal" fill="#d8d8d8" text-anchor="start"  textLength="6.2" lengthAdjust="spacingAndGlyphs">E</text>
<ellipse cx="749.5" cy="253.5" rx="10.5" ry="6.5" fill="#cc0000"/>
<text x="749.5" y="257.5" font-family='"Liberation Sans", sans-serif' font-size="11" font-weight="normal" fill="#ffffff" text-anchor="middle"  textLength="14.5" lengthAdjust="spacingAndGlyphs">G3</text>
<ellipse cx="693.7" cy="279.2" rx="10.5" ry="6.5" fill="#cc0000"/>
<text x="693.7" y="283.2" font-family='"Liberation Sans", sans-serif' font-size="11" font-weight="normal" fill="#ffffff" text-anchor="middle"  textLength="19.5" lengthAdjust="spacingAndGlyphs">G28</text>
<ellipse cx="815.5" cy="300.3" rx="10.5" ry="6.5" fill="#cc0000"/>
<text x="815.5" y="304.3" font-family='"Liberation Sans", sans-serif' font-size="11" font-weight="normal" fill="#ffffff" text-anchor="middle"  textLength="18.5" lengthAdjust="spacingAndGlyphs">G17</text>
<ellipse cx="803.6" cy="310.5" rx="10.5" ry="6.5" fill="#cc0000"/>
<text x="803.6" y="314.5" font-family='"Liberation Sans", sans-serif' font-size="11" font-weight="normal" fill="#ffffff" text-anchor="middle"  textLength="18.5" lengthAdjust="spacingAndGlyphs">G19</text>
<ellipse cx="780.4" cy="314.4" rx="10.5" ry="6.5" fill="#cc0000"/>
<text x="780.4" y="318.4" font-family='"Liberation Sans", sans-serif' font-size="11" font-weight="normal" fill="#ffffff" text-anchor="middle"  textLength="14.5" lengthAdjust="spacingAndGlyphs">G6</text>
<ellipse cx="662.7" cy="315.7" rx="10.5" ry="6.5" fill="#cc0000"/>
<text x="662.7" y="319.7" font-family='"Liberation Sans", sans-serif' font-size="11" font-weight="normal" fill="#ffffff" text-anchor="middle"  textLength="19.5" lengthAdjust="spacingAndGlyphs">G32</text>
<ellipse cx="703.4" cy="323.3" rx="10.5" ry="6.5" fill="#cc0000"/>
<text x="703.4" y="327.3" font-family='"Liberation Sans", sans-serif' font-size="11" font-weight="normal" fill="#ffffff" text-anchor="middle"  textLength="19.5" lengthAdjust="spacingAndGlyphs">G25</text>
<ellipse cx="742.3" cy="342.4" rx="10.5" ry="6.5" fill="#cc0000"/>
<text x="742.3" y="346.4" font-family='"Liberation Sans", sans-serif' font-size="11" font-weight="normal" fill="#ffffff" text-anchor="middle"  textLength="18.5" lengthAdjust="spacingAndGlyphs">G12</text>
<ellipse cx="765.7" cy="361.2" rx="10.5" ry="6.5" fill="#00cc00"/>
<text x="765.7" y="365.2" font-family='"Liberation Sans", sans-serif' font-size="11" font-weight="normal" fill="#ffffff" text-anchor="middle"  textLength="18.5" lengthAdjust="spacingAndGlyphs">G11</text>
<ellipse cx="676.4" cy="365.2" rx="10.5" ry="6.5" fill="#00cc00"/>
<text x="676.4" y="369.2" font-family='"Liberation Sans", sans-serif' font-size="11" font-weight="normal" fill="#ffffff" text-anchor="middle"  textLength="19.5" lengthAdjust="spacingAndGlyphs">G29</text>
<ellipse cx="726.2" cy="405.3" rx="10.5" ry="6.5" fill="#00cc00"/>
<text x="726.2" y="409.3" font-family='"Liberation Sans", sans-serif' font-size="11" font-weight="normal" fill="#ffffff" text-anchor="middle"  textLength="19.5" lengthAdjust="spacingAndGlyphs">G24</text>
<path d="M5.5 526 L10.5 531 M10.5 526 L5.5 531" stroke="#000" stroke-width="1.8"/>
<path d="M7.5 537 V663 M10.5 537 V663" stroke="#a0a0a0"/>
<path d="M6.5 537 V663 M9.5 537 V663" stroke="#fff"/>
<rect x="20" y="588" width="266" height="59" fill="#00c000" />
<rect x="20" y="587" width="266" height="1" fill="#c8c0c8" />
<rect x="20" y="575" width="266" height="1" fill="#c8c8c8" />
<text x="153.0" y="594" font-family='"Liberation Sans", sans-serif' font-size="8" font-weight="normal" fill="#002800" text-anchor="middle"  textLength="14" lengthAdjust="spacingAndGlyphs">G11</text>
<text x="153.0" y="644" font-family='"Liberation Sans", sans-serif' font-size="13.5" font-weight="bold" fill="#000" text-anchor="middle"  textLength="14.5" lengthAdjust="spacingAndGlyphs">30</text>
<text x="153.0" y="660" font-family='"Liberation Sans", sans-serif' font-size="13.5" font-weight="normal" fill="#e0e0e0" text-anchor="middle"  textLength="25" lengthAdjust="spacingAndGlyphs">G11</text>
<rect x="287" y="581" width="267" height="66" fill="#00c000" />
<rect x="287" y="580" width="267" height="1" fill="#c8c0c8" />
<rect x="287" y="565" width="267" height="1" fill="#c8c8c8" />
<rect x="287" y="626" width="267" height="1" fill="#c8c8c8" />
<text x="420.5" y="587" font-family='"Liberation Sans", sans-serif' font-size="8" font-weight="normal" fill="#002800" text-anchor="middle"  textLength="14" lengthAdjust="spacingAndGlyphs">G24</text>
<text x="420.5" y="644" font-family='"Liberation Sans", sans-serif' font-size="13.5" font-weight="bold" fill="#000" text-anchor="middle"  textLength="14.5" lengthAdjust="spacingAndGlyphs">33</text>
<text x="420.5" y="660" font-family='"Liberation Sans", sans-serif' font-size="13.5" font-weight="normal" fill="#e0e0e0" text-anchor="middle"  textLength="25" lengthAdjust="spacingAndGlyphs">G24</text>
<rect x="555" y="617" width="267" height="30" fill="#00c000" />
<rect x="555" y="616" width="267" height="1" fill="#c8c0c8" />
<rect x="555" y="589" width="267" height="1" fill="#c8c8c8" />
<rect x="555" y="645" width="267" height="1" fill="#c8c8c8" />
<text x="688.5" y="623" font-family='"Liberation Sans", sans-serif' font-size="8" font-weight="normal" fill="#002800" text-anchor="middle"  textLength="14" lengthAdjust="spacingAndGlyphs">G29</text>
<text x="688.5" y="644" font-family='"Liberation Sans", sans-serif' font-size="13.5" font-weight="bold" fill="#000" text-anchor="middle"  textLength="14.5" lengthAdjust="spacingAndGlyphs">18</text>
<text x="688.5" y="660" font-family='"Liberation Sans", sans-serif' font-size="13.5" font-weight="normal" fill="#e0e0e0" text-anchor="middle"  textLength="25" lengthAdjust="spacingAndGlyphs">G29</text>
<path d="M20 636.5 H822" stroke="#d0d0d0" stroke-dasharray="3 3"/>
<text x="830.5" y="641" font-family='"Liberation Sans", sans-serif' font-size="13.5" font-weight="normal" fill="#e0e0e0" text-anchor="middle"  textLength="14" lengthAdjust="spacingAndGlyphs">10</text>
<path d="M20 612.5 H822" stroke="#d0d0d0" stroke-dasharray="3 3"/>
<text x="830.5" y="617" font-family='"Liberation Sans", sans-serif' font-size="13.5" font-weight="normal" fill="#e0e0e0" text-anchor="middle"  textLength="14" lengthAdjust="spacingAndGlyphs">20</text>
<path d="M20 588.5 H822" stroke="#d0d0d0" stroke-dasharray="3 3"/>
<text x="830.5" y="593" font-family='"Liberation Sans", sans-serif' font-size="13.5" font-weight="normal" fill="#e0e0e0" text-anchor="middle"  textLength="14" lengthAdjust="spacingAndGlyphs">30</text>
<path d="M20 564.5 H822" stroke="#d0d0d0" stroke-dasharray="3 3"/>
<text x="830.5" y="569" font-family='"Liberation Sans", sans-serif' font-size="13.5" font-weight="normal" fill="#e0e0e0" text-anchor="middle"  textLength="14" lengthAdjust="spacingAndGlyphs">40</text>
<path d="M20 540.5 H822" stroke="#d0d0d0" stroke-dasharray="3 3"/>
<text x="830.5" y="545" font-family='"Liberation Sans", sans-serif' font-size="13.5" font-weight="normal" fill="#e0e0e0" text-anchor="middle"  textLength="14" lengthAdjust="spacingAndGlyphs">50</text>
<text x="830.5" y="661" font-family='"Liberation Sans", sans-serif' font-size="13.5" font-weight="normal" fill="#e0e0e0" text-anchor="middle"  textLength="16" lengthAdjust="spacingAndGlyphs">dB</text>
<rect x="19" y="527" width="804" height="1" fill="#c8c8c8" />
<rect x="19" y="647" width="804" height="1" fill="#c8c8c8" />
<rect x="19" y="527" width="1" height="121" fill="#c8c8c8" />
<rect x="822" y="527" width="1" height="121" fill="#c8c8c8" />
<rect x="286" y="527" width="1" height="121" fill="#c8c8c8" />
<rect x="554" y="527" width="1" height="121" fill="#c8c8c8" />
<rect x="0" y="666" width="845" height="25" fill="#f0f0f0" />
<rect x="0" y="669" width="844" height="1" fill="#a0a0a0" />
<rect x="0" y="670" width="844" height="1" fill="#ffffff" />
<text x="3" y="686" font-family='"Liberation Sans", sans-serif' font-size="12" font-weight="normal" fill="#000" text-anchor="start"  textLength="32" lengthAdjust="spacingAndGlyphs">Ready</text>
<rect x="125" y="673" width="226" height="1" fill="#a0a0a0" />
<rect x="125" y="673" width="1" height="17" fill="#a0a0a0" />
<rect x="125" y="689" width="226" height="1" fill="#ffffff" />
<rect x="350" y="673" width="1" height="17" fill="#ffffff" />
<rect x="127" y="680" width="3" height="1" fill="#000" />
<rect x="127" y="682" width="3" height="1" fill="#000" />
<rect x="129" y="679" width="6" height="5" fill="#000" />
<rect x="130" y="678" width="5" height="7" fill="#000" />
<rect x="131" y="679" width="2" height="5" fill="#c8c8c8" />
<rect x="136" y="679" width="6" height="5" fill="#000" />
<rect x="136" y="678" width="5" height="7" fill="#000" />
<rect x="138" y="679" width="2" height="5" fill="#c8c8c8" />
<rect x="141" y="680" width="3" height="1" fill="#000" />
<rect x="141" y="682" width="3" height="1" fill="#000" />
<text x="147.5" y="686" font-family='"Liberation Sans", sans-serif' font-size="12" font-weight="normal" fill="#000" text-anchor="start"  textLength="148.5" lengthAdjust="spacingAndGlyphs">NTRIP client: Not connected</text>
<rect x="361" y="673" width="243" height="1" fill="#a0a0a0" />
<rect x="361" y="673" width="1" height="17" fill="#a0a0a0" />
<rect x="361" y="689" width="243" height="1" fill="#ffffff" />
<rect x="603" y="673" width="1" height="17" fill="#ffffff" />
<rect x="363" y="680" width="3" height="1" fill="#000" />
<rect x="363" y="682" width="3" height="1" fill="#000" />
<rect x="365" y="679" width="6" height="5" fill="#000" />
<rect x="366" y="678" width="5" height="7" fill="#000" />
<rect x="367" y="679" width="2" height="5" fill="#c8c8c8" />
<rect x="372" y="679" width="6" height="5" fill="#000" />
<rect x="372" y="678" width="5" height="7" fill="#000" />
<rect x="374" y="679" width="2" height="5" fill="#c8c8c8" />
<rect x="377" y="680" width="3" height="1" fill="#000" />
<rect x="377" y="682" width="3" height="1" fill="#000" />
<text x="382.5" y="686" font-family='"Liberation Sans", sans-serif' font-size="12" font-weight="normal" fill="#000" text-anchor="start"  textLength="149.5" lengthAdjust="spacingAndGlyphs">MQTT client: Not connected</text>
<rect x="605" y="673" width="115" height="1" fill="#a0a0a0" />
<rect x="605" y="673" width="1" height="17" fill="#a0a0a0" />
<rect x="605" y="689" width="115" height="1" fill="#ffffff" />
<rect x="719" y="673" width="1" height="17" fill="#ffffff" />
<text x="607.5" y="686" font-family='"Liberation Sans", sans-serif' font-size="12" font-weight="normal" fill="#000" text-anchor="start"  textLength="43.5" lengthAdjust="spacingAndGlyphs">u-blox 7</text>
<rect x="723" y="673" width="106" height="1" fill="#a0a0a0" />
<rect x="723" y="673" width="1" height="17" fill="#a0a0a0" />
<rect x="723" y="689" width="106" height="1" fill="#ffffff" />
<rect x="828" y="673" width="1" height="17" fill="#ffffff" />
<rect x="725" y="680" width="17" height="1" fill="#000" />
<rect x="725" y="682" width="17" height="1" fill="#000" />
<rect x="725" y="681" width="17" height="1" fill="#808080" />
<rect x="729" y="678" width="8" height="7" rx="2" fill="#000"/>
<rect x="730" y="679" width="2" height="5" fill="#00a000" />
<rect x="734" y="679" width="2" height="5" fill="#00a000" />
<text x="744.5" y="686" font-family='"Liberation Sans", sans-serif' font-size="12" font-weight="normal" fill="#000" text-anchor="start"  textLength="74.5" lengthAdjust="spacingAndGlyphs">COM6 115200</text>
<rect x="831" y="673" width="13" height="1" fill="#a0a0a0" />
<path d="M832 689 L843 678 M836 689 L843 682 M840 689 L843 686" stroke="#a0a0a0" stroke-width="1.2"/>
<rect x="844" y="0" width="1" height="691" fill="#d8d8d8" />
<rect x="0" y="0" width="1" height="142" fill="#ececec" />
<rect x="0" y="0" width="845" height="1" fill="#ececec" />
<rect x="108" y="0" width="76" height="1" fill="#b4d0ee" />
<rect x="107" y="0" width="1" height="1" fill="#3070d0" />
<rect x="183" y="0" width="1" height="1" fill="#3070d0" />
<rect x="634" y="519" width="210" height="1" fill="#a0a0a0" />
<rect x="634" y="520" width="210" height="1" fill="#ffffff" />
</svg>
</body></html>
